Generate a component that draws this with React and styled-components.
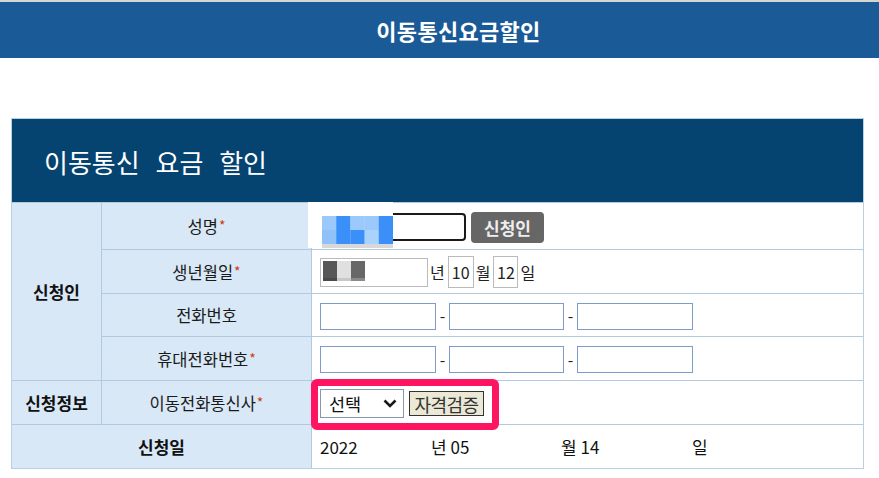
import React from "react";
import styled, { createGlobalStyle } from "styled-components";

const Global = createGlobalStyle`
  html, body { margin: 0; padding: 0; background: #fff; }
  body { font-family: "Noto Sans CJK KR", "Noto Sans", sans-serif; color: #222; }
  * { box-sizing: border-box; }
`;

const Page = styled.div`
  border-top: 2px solid #d4d4d4;
`;

const TopBar = styled.header`
  height: 56px;
  background: #1a5a96;
  display: flex;
  align-items: center;
  justify-content: center;
`;

const TopTitle = styled.h1`
  margin: 0 0 0 38px;
  font-size: 22px;
  font-weight: 700;
  color: #fff;
  letter-spacing: 0.3px;
`;

const FormGrid = styled.section`
  margin: 60px 0 0 11px;
  width: 853px;
  border: 1px solid #b8d0e4;
  background: #b3c9dc;
  display: grid;
  grid-template-columns: 89px 209px 551px;
  grid-template-rows: 83px 46px 43px 42px 43px 43px 43px;
  gap: 1px;
`;

const Header = styled.div`
  grid-column: 1 / -1;
  background: #054371;
  color: #fff;
  font-size: 26px;
  word-spacing: 10px;
  display: flex;
  align-items: center;
  padding-left: 32px;
  padding-top: 1px;
`;

const GroupLabel = styled.div`
  grid-row: span ${(p) => p.$rows || 1};
  grid-column: span ${(p) => p.$cols || 1};
  background: #d8e8f6;
  font-size: 17px;
  font-weight: 700;
  color: #111;
  display: flex;
  align-items: center;
  justify-content: center;
`;

const FieldLabel = styled.div`
  background: #d8e8f6;
  font-size: 16.5px;
  color: #1a1a1a;
  display: flex;
  align-items: center;
  justify-content: center;
`;

const Req = styled.span`
  color: #d03a10;
  font-size: 14px;
  margin-left: 1px;
  position: relative;
  top: -1px;
`;

const ValueCell = styled.div`
  position: relative;
  background: #fff;
  display: flex;
  align-items: center;
  padding-left: 8px;
  font-size: 16px;
  color: #222;
`;

const BlurOverlay = styled.svg`
  position: absolute;
  left: -4px;
  top: -1px;
  z-index: 2;
`;

const NameInput = styled.div`
  width: 146px;
  height: 28px;
  border: 2px solid #1a1a1a;
  border-radius: 4px;
  margin-top: 2px;
`;

const GrayButton = styled.div`
  margin-left: 5px;
  width: 73px;
  height: 31px;
  margin-top: 2px;
  background: #666;
  border-radius: 4px;
  color: #eee;
  font-size: 17px;
  font-weight: 700;
  display: flex;
  align-items: center;
  justify-content: center;
`;

const BoxInput = styled.div`
  position: relative;
  width: ${(p) => p.$w}px;
  height: ${(p) => p.$h}px;
  border: 1px solid ${(p) => p.$c || "#bbb"};
  background: #fff;
  display: flex;
  align-items: center;
  justify-content: center;
  font-size: 16px;
  margin-top: ${(p) => p.$mt || 0}px;
`;

const Unit = styled.span`
  margin: 0 3px 0 2px;
  font-size: 16px;
`;

const Dash = styled.span`
  width: 13px;
  text-align: center;
  font-size: 16px;
`;

const Highlight = styled.div`
  position: absolute;
  left: -1px;
  top: -2px;
  width: 188px;
  height: 51px;
  border: 7px solid #ff1462;
  border-radius: 6px;
  z-index: 2;
  pointer-events: none;
`;

const Select = styled.div`
  width: 84px;
  height: 29px;
  margin-top: 2px;
  border: 1px solid #8a98ae;
  display: flex;
  align-items: center;
  justify-content: space-between;
  padding: 0 6px 0 8px;
  font-size: 17.5px;
  color: #111;
`;

const CheckButton = styled.div`
  margin-left: 5px;
  margin-top: 2px;
  width: 75px;
  height: 25px;
  background: #ebe8d6;
  border: 1px solid #333;
  color: #333;
  font-size: 18px;
  display: flex;
  align-items: center;
  justify-content: center;
  letter-spacing: -0.5px;
`;

const DateText = styled.span`
  width: ${(p) => p.$w}px;
  font-size: 17px;
  color: #111;
  white-space: pre;
`;

function NameBlur() {
  const light = "#9cc9fb";
  const light2 = "#90c1f8";
  const blue = "#3a8ff8";
  const lighter = "#aad2fc";
  const cols = [
    [light, light2],
    [blue, blue],
    [light, blue],
    [light, lighter],
    [blue, blue],
  ];
  return (
    <BlurOverlay width="85" height="46" viewBox="0 0 85 46">
      <rect x="0" y="0" width="85" height="46" fill="#fff" />
      {cols.map((c, i) => (
        <g key={i}>
          <rect x={14 + i * 14.2} y="14" width="14.4" height="14" fill={c[0]} />
          <rect x={14 + i * 14.2} y="28" width="14.4" height="14" fill={c[1]} />
        </g>
      ))}
      <rect x="14" y="42" width="71" height="4" fill="#d8d8d8" />
    </BlurOverlay>
  );
}

const BirthBlur = styled.svg`
  position: absolute;
  left: 1px;
  top: 1px;
`;

function BirthBlocks() {
  const cols = [
    ["#575757", "#4a4a4a"],
    ["#e0e0e0", "#c8c8c8"],
    ["#676767", "#8a8a8a"],
  ];
  return (
    <BirthBlur width="60" height="24" viewBox="0 0 60 24">
      {cols.map((c, i) => (
        <g key={i}>
          <rect x={1 + i * 14} y="1" width="14" height="17" fill={c[0]} />
          <rect x={1 + i * 14} y="18" width="14" height="3" fill={c[1]} />
        </g>
      ))}
    </BirthBlur>
  );
}

function Chevron() {
  return (
    <svg width="14" height="9" viewBox="0 0 14 9">
      <polyline points="1.5,1.5 7,7 12.5,1.5" fill="none" stroke="#1a1a1a" strokeWidth="2.6" />
    </svg>
  );
}

function PhoneInputs() {
  return (
    <>
      <BoxInput $w={116} $h={27} $c="#7f9bc8" $mt={2} />
      <Dash>-</Dash>
      <BoxInput $w={115} $h={27} $c="#7f9bc8" $mt={2} />
      <Dash>-</Dash>
      <BoxInput $w={116} $h={27} $c="#7f9bc8" $mt={2} />
    </>
  );
}

export default function App() {
  return (
    <Page>
      <Global />
      <TopBar>
        <TopTitle>이동통신요금할인</TopTitle>
      </TopBar>
      <FormGrid>
        <Header>이동통신 요금 할인</Header>

        <GroupLabel $rows={4}>신청인</GroupLabel>
        <FieldLabel>
          성명<Req>*</Req>
        </FieldLabel>
        <ValueCell>
          <NameBlur />
          <NameInput />
          <GrayButton>신청인</GrayButton>
        </ValueCell>

        <FieldLabel>
          생년월일<Req>*</Req>
        </FieldLabel>
        <ValueCell>
          <BoxInput $w={108} $h={29} $mt={2}>
            <BirthBlocks />
          </BoxInput>
          <Unit>년</Unit>
          <BoxInput $w={26} $h={32}>10</BoxInput>
          <Unit>월</Unit>
          <BoxInput $w={25} $h={32}>12</BoxInput>
          <Unit>일</Unit>
        </ValueCell>

        <FieldLabel>전화번호</FieldLabel>
        <ValueCell>
          <PhoneInputs />
        </ValueCell>

        <FieldLabel>
          휴대전화번호<Req>*</Req>
        </FieldLabel>
        <ValueCell>
          <PhoneInputs />
        </ValueCell>

        <GroupLabel>신청정보</GroupLabel>
        <FieldLabel>
          이동전화통신사<Req>*</Req>
        </FieldLabel>
        <ValueCell>
          <Highlight />
          <Select>
            선택
            <Chevron />
          </Select>
          <CheckButton>자격검증</CheckButton>
        </ValueCell>

        <GroupLabel $cols={2}>신청일</GroupLabel>
        <ValueCell>
          <DateText $w={111}>2022</DateText>
          <DateText $w={130}>년 05</DateText>
          <DateText $w={131}>월 14</DateText>
          <DateText $w={30}>일</DateText>
        </ValueCell>
      </FormGrid>
    </Page>
  );
}
